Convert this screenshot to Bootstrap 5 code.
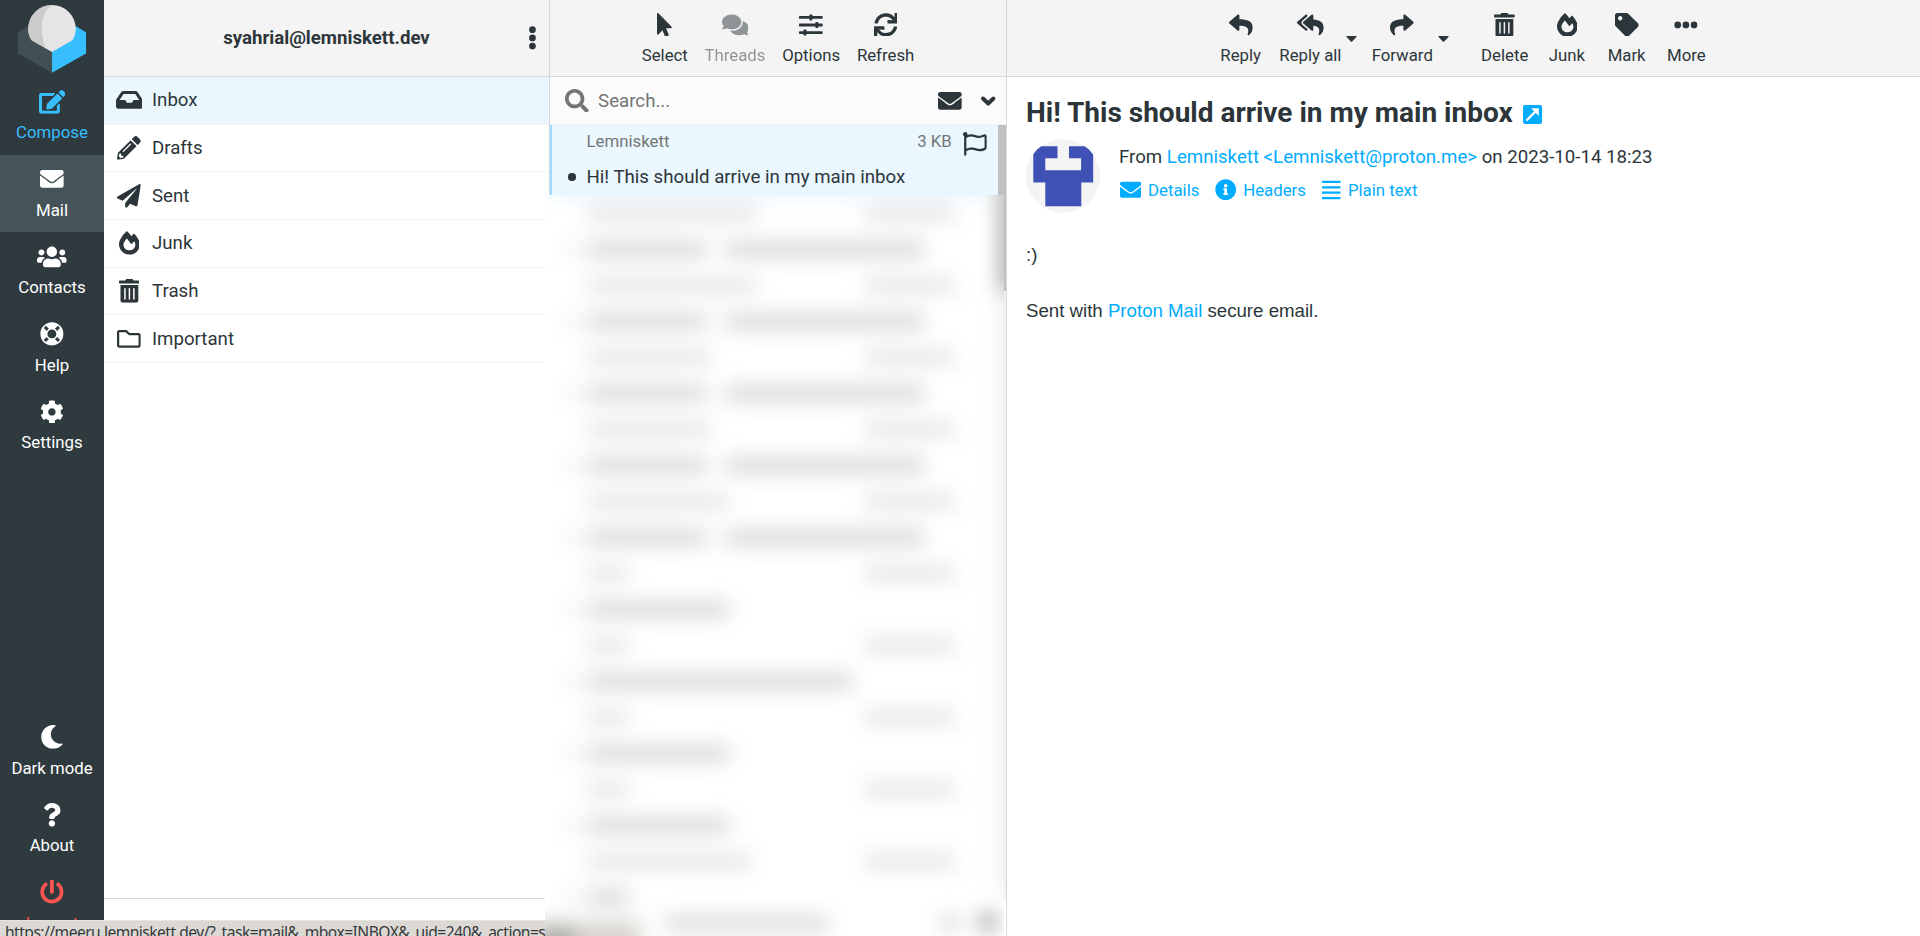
<!DOCTYPE html>
<html lang="en">
<head>
<meta charset="utf-8">
<title>Webmail</title>
<meta name="viewport" content="width=device-width, initial-scale=1">
<link href="https://cdn.jsdelivr.net/npm/bootstrap@5.3.0/dist/css/bootstrap.min.css" rel="stylesheet">
<style>
  body { font-family: Roboto, sans-serif; font-size: 18.667px; line-height: 1.5; color: #2c363a; background: #fff; height: 936px; overflow: hidden; }
  a { text-decoration: none; }
  a.lnk, a.lnk:not([href]) { color: #00acff; text-decoration: none; }
  .ico { height: 23.8px; width: auto; fill: currentColor; display: block; flex: none; }

  .taskmenu { width: 104px; background: #2f3a3f; height: 936px; overflow: hidden; }
  .taskmenu .logo-box { height: 77.4px; flex: none; }
  a.task:not([href]) { height: 77.4px; flex: none; padding-top: 12.6px; color: #fff; font-size: 16.8px; line-height: 22px; white-space: nowrap; }
  .task .ico { margin-bottom: 7.600px; }
  a.task.compose:not([href]) { color: #37beff; }
  .task.current { background: #465459; }
  a.task.logout:not([href]) { color: #ff5552; }
  .task-bottom { margin-top: 248.4px; }

  .pane-head { height: 77px; background: #f4f4f4; border-bottom: 1px solid #d0dadd; flex: none; }
  .folders { width: 446px; border-right: 1px solid #d0dadd; }
  .folders .ico.kebab { height: 23.800px; right: 12px; }
  .folders .folder { height: 47.667px; border: 0; border-bottom: 1px solid #f1f3f4 !important; border-radius: 0; padding: 0 0 0 10px; color: inherit; background: transparent; }
  .folders .folder.current { background: #eaf7fe; }
  .folder .slot { width: 30px; margin-right: 8px; }
  .folder-foot { height: 38px; border-top: 1px solid #d0dadd; }

  .messages { width: 457px; border-right: 1px solid #d0dadd; }
  .tool { min-width: 59.7px; padding: 12.500px 8.8px 0; font-size: 16.8px; line-height: 22px; white-space: nowrap; height: 76px; }
  .list-tools .tool { min-width: 0; padding-left: 8.350px; padding-right: 8.350px; }
  .tool .ico { margin-bottom: 7.600px; }
  .tool.off { opacity: .5; }
  .drop { width: 12.600px; height: 76px; padding-top: 36px; }
  .drop svg { display: block; margin-left: -4px; }
  .gap-wide { width: 18px; }

  .searchbar { height: 48px; background: #fbfbfb; border-bottom: 1px solid #f1f3f4; padding: 0 8px 0 15px; color: #737677; flex: none; }
  .searchbar .dark { color: #2c363a; }
  .msg { height: 72px; background: #eaf7fe; border-left: 2px solid #9fdcff; width: 448px; }
  .msg .from-line { font-size: 16.8px; line-height: 24px; color: #737677; }
  .dot { width: 7.5px; height: 7.5px; background: #2c363a; }
  .thumb { width: 8px; height: 166px; background: #c1c1c1; }
  .track { width: 8px; background: #f1f1f1; height: 773px; }

  .veil { left: -5px; top: 195px; width: 459px; height: 741px; background: #fff; }
  .veil-in { filter: blur(10px); inset: -40px; padding: 40px 50px 0 82px; }
  .veil-in .line-a, .veil-in .line-b { height: 36px; }
  .bar { height: 15px; background: #e4e4e4; flex: none; }
  .line-b .bar { background: #d3d6d6; }
  .shade { right: 24px; width: 22px; top: 0; height: 136px; background: #b4b4b4; }
  .shade-low { right: 24px; width: 22px; top: 136px; height: 600px; background: #f0f0f0; }
  .shade-sel { left: 40px; right: 48px; top: 10px; height: 30px; background: #e6f5fd; }
  .shade-status { left: 0; width: 136px; bottom: 0; height: 55px; background: #d8d5cf; }
  .shade-ink { left: 38px; width: 30px; bottom: 22px; height: 24px; background: #a09f9b; }
  .shade-foot { left: 160px; width: 164px; bottom: 46px; height: 14px; background: #d6d6d6; }
  .shade-f1 { left: 438px; width: 14px; bottom: 46px; height: 14px; background: #c8c8c8; }
  .shade-f2 { left: 474px; width: 18px; bottom: 46px; height: 16px; background: #9a9a9a; }

  .reader-body { padding: 15px 19px 0; }
  .subject { font-size: 28px; font-weight: 700; line-height: 40px; margin: 0; padding-top: 1px; }
  .avatar { width: 74px; height: 74px; flex: none; margin-top: -1px; }
  .msg-links { font-size: 16.8px; line-height: 24px; margin-top: 7px; }
  .msg-links .ico { height: 21.4px; }
  .mail-text { font-family: "Liberation Sans", sans-serif; font-size: 18.667px; line-height: 28px; margin-top: 28px; }

  .statusbar { left: 0; top: 920px; width: 545px; height: 16px; background: #dcd9d5; border-top: 1px solid #e6e4e1; font-family: "Noto Sans", sans-serif; font-size: 15.6px; letter-spacing: -.52px; line-height: 23px; color: #36393b; padding-left: 5px; white-space: nowrap; overflow: hidden; }
</style>
</head>
<body>
<svg class="d-none" xmlns="http://www.w3.org/2000/svg">
  <symbol id="edit" viewBox="0 0 576 512"><path d="M402.6 83.2l90.2 90.2c3.8 3.8 3.8 10 0 13.8L274.4 405.6l-92.8 10.3c-12.4 1.4-22.9-9.1-21.5-21.5l10.3-92.8L388.8 83.2c3.8-3.8 10-3.8 13.8 0zm162-22.9l-48.8-48.8c-15.2-15.2-39.9-15.2-55.2 0l-35.4 35.4c-3.8 3.8-3.8 10 0 13.8l90.2 90.2c3.8 3.8 10 3.8 13.8 0l35.4-35.4c15.2-15.3 15.2-40 0-55.2zM384 346.2V448H64V128h229.8c3.2 0 6.2-1.3 8.5-3.5l40-40c7.6-7.6 2.2-20.5-8.5-20.5H48C21.5 64 0 85.5 0 112v352c0 26.5 21.5 48 48 48h352c26.5 0 48-21.5 48-48V306.2c0-10.7-12.9-16-20.5-8.5l-40 40c-2.2 2.3-3.5 5.3-3.5 8.5z"/></symbol>
  <symbol id="mail" viewBox="0 0 512 512"><path d="M502.3 190.8c3.9-3.1 9.7-.2 9.7 4.7V400c0 26.5-21.5 48-48 48H48c-26.5 0-48-21.5-48-48V195.6c0-5 5.7-7.8 9.7-4.7 22.4 17.4 52.1 39.5 154.1 113.6 21.1 15.4 56.7 47.8 92.2 47.6 35.7.3 72-32.8 92.3-47.6 102-74.1 131.6-96.3 154-113.7zM256 320c23.2.4 56.6-29.2 73.4-41.4 132.7-96.3 142.8-104.7 173.4-128.7 5.8-4.5 9.2-11.5 9.2-18.9v-19c0-26.5-21.5-48-48-48H48c-26.5 0-48 21.5-48 48v19c0 7.4 3.4 14.3 9.2 18.9 30.6 23.9 40.7 32.4 173.4 128.7 16.8 12.2 50.2 41.8 73.4 41.4z"/></symbol>
  <symbol id="users" viewBox="0 0 640 512"><path d="M96 224c35.3 0 64-28.7 64-64s-28.7-64-64-64-64 28.7-64 64 28.7 64 64 64zm448 0c35.3 0 64-28.7 64-64s-28.7-64-64-64-64 28.7-64 64 28.7 64 64 64zm32 32h-64c-17.6 0-33.5 7.1-45.1 18.6 40.3 22.1 68.9 62 75.1 109.4h66c17.7 0 32-14.3 32-32v-32c0-35.3-28.7-64-64-64zm-256 0c61.9 0 112-50.1 112-112S381.9 32 320 32 208 82.1 208 144s50.1 112 112 112zm76.8 32h-8.3c-20.8 10-43.9 16-68.5 16s-47.6-6-68.5-16h-8.3C179.6 288 128 339.6 128 403.2V432c0 26.5 21.5 48 48 48h288c26.5 0 48-21.5 48-48v-28.8c0-63.6-51.6-115.2-115.2-115.2zm-223.7-13.4C161.5 263.1 145.6 256 128 256H64c-35.3 0-64 28.7-64 64v32c0 17.7 14.3 32 32 32h65.9c6.3-47.4 34.9-87.3 75.2-109.4z"/></symbol>
  <symbol id="ring" viewBox="0 0 512 512"><path d="M256 8C119.033 8 8 119.033 8 256s111.033 248 248 248 248-111.033 248-248S392.967 8 256 8zm173.696 119.559l-63.399 63.399c-10.987-18.559-26.67-34.252-45.255-45.255l63.399-63.399a218.396 218.396 0 0 1 45.255 45.255zM256 352c-53.019 0-96-42.981-96-96s42.981-96 96-96 96 42.981 96 96-42.981 96-96 96zM127.559 82.304l63.399 63.399c-18.559 10.987-34.252 26.67-45.255 45.255l-63.399-63.399a218.372 218.372 0 0 1 45.255-45.255zM82.304 384.441l63.399-63.399c10.987 18.559 26.67 34.252 45.255 45.255l-63.399 63.399a218.396 218.396 0 0 1-45.255-45.255zm302.137 45.255l-63.399-63.399c18.559-10.987 34.252-26.67 45.255-45.255l63.399 63.399a218.403 218.403 0 0 1-45.255 45.255z"/></symbol>
  <symbol id="cog" viewBox="0 0 512 512"><path d="M487.4 315.7l-42.6-24.6c4.3-23.2 4.3-47 0-70.2l42.6-24.6c4.9-2.8 7.1-8.6 5.5-14-11.1-35.6-30-67.8-54.7-94.6-3.8-4.1-10-5.1-14.8-2.3L380.8 110c-17.9-15.4-38.5-27.3-60.8-35.1V25.8c0-5.6-3.9-10.5-9.4-11.7-36.7-8.2-74.3-7.8-109.2 0-5.5 1.2-9.4 6.1-9.4 11.7V75c-22.2 7.9-42.8 19.8-60.8 35.1L88.7 85.5c-4.9-2.8-11-1.9-14.8 2.3-24.7 26.7-43.6 58.9-54.7 94.6-1.7 5.4.6 11.2 5.5 14L67.3 221c-4.3 23.2-4.3 47 0 70.2l-42.6 24.6c-4.9 2.8-7.1 8.6-5.5 14 11.1 35.6 30 67.8 54.7 94.6 3.8 4.1 10 5.1 14.8 2.3l42.6-24.6c17.9 15.4 38.5 27.3 60.8 35.1v49.2c0 5.6 3.9 10.5 9.4 11.7 36.7 8.2 74.3 7.8 109.2 0 5.5-1.2 9.4-6.1 9.4-11.7v-49.2c22.2-7.9 42.8-19.8 60.8-35.1l42.6 24.6c4.9 2.8 11 1.9 14.8-2.3 24.7-26.7 43.6-58.9 54.7-94.6 1.5-5.5-.7-11.3-5.6-14.1zM256 336c-44.1 0-80-35.9-80-80s35.9-80 80-80 80 35.9 80 80-35.9 80-80 80z"/></symbol>
  <symbol id="moon" viewBox="0 0 512 512"><path d="M283.211 512c78.962 0 151.079-35.925 198.857-94.792 7.068-8.708-.639-21.43-11.562-19.35-124.203 23.654-238.262-71.576-238.262-196.954 0-72.222 38.662-138.635 101.498-174.394 9.686-5.512 7.25-20.197-3.756-22.23A258.156 258.156 0 0 0 283.211 0c-141.309 0-256 114.511-256 256 0 141.309 114.511 256 256 256z"/></symbol>
  <symbol id="question" viewBox="0 0 384 512"><path d="M202.021 0C122.202 0 70.503 32.703 29.914 91.026c-7.363 10.58-5.093 25.086 5.178 32.874l43.138 32.709c10.373 7.865 25.132 6.026 33.253-4.148 25.049-31.381 43.63-49.449 82.757-49.449 30.764 0 68.816 19.799 68.816 49.631 0 22.552-18.617 34.134-48.993 51.164-35.423 19.86-82.299 44.576-82.299 106.405V320c0 13.255 10.745 24 24 24h72.471c13.255 0 24-10.745 24-24v-5.773c0-42.86 125.268-44.645 125.268-160.627C377.504 66.256 286.902 0 202.021 0zM192 373.459c-38.196 0-69.271 31.075-69.271 69.271 0 38.195 31.075 69.27 69.271 69.27s69.271-31.075 69.271-69.271-31.075-69.27-69.271-69.27z"/></symbol>
  <symbol id="power" viewBox="0 0 512 512"><path d="M400 54.1c63 45 104 118.6 104 201.9 0 136.8-110.8 247.7-247.5 248C120 504.3 8.2 393 8 256.4 7.9 173.1 48.9 99.3 111.8 54.2c11.7-8.3 28-4.8 35 7.7L162.6 90c5.9 10.5 3.1 23.8-6.6 31-41.5 30.8-68 79.6-68 134.9-.1 92.3 74.5 168.1 168 168.1 91.6 0 168.6-74.2 168-169.1-.3-51.8-24.7-101.8-68.1-134-9.7-7.2-12.4-20.5-6.5-30.9l15.8-28.1c7-12.4 23.2-16.1 34.8-7.8zM296 264V24c0-13.3-10.7-24-24-24h-32c-13.3 0-24 10.7-24 24v240c0 13.3 10.7 24 24 24h32c13.3 0 24-10.7 24-24z"/></symbol>
  <symbol id="inbox" viewBox="0 0 576 512"><path d="M567.938 243.908L462.25 85.374A48.003 48.003 0 0 0 422.311 64H153.689a48 48 0 0 0-39.938 21.374L8.062 243.908A47.994 47.994 0 0 0 0 270.533V400c0 26.51 21.49 48 48 48h480c26.51 0 48-21.49 48-48V270.533a47.994 47.994 0 0 0-8.062-26.625zM162.252 128h251.497l85.333 128H376l-32 64H232l-32-64H76.918l85.334-128z"/></symbol>
  <symbol id="pencil" viewBox="0 0 512 512"><path d="M497.9 142.1l-46.1 46.1c-4.7 4.7-12.3 4.7-17 0l-111-111c-4.7-4.7-4.7-12.3 0-17l46.1-46.1c18.7-18.7 49.1-18.7 67.9 0l60.1 60.1c18.8 18.7 18.8 49.1 0 67.9zM284.2 99.8L21.6 362.4.4 483.9c-2.9 16.4 11.4 30.6 27.8 27.8l121.5-21.3 262.6-262.6c4.7-4.7 4.7-12.3 0-17l-111-111c-4.8-4.7-12.4-4.7-17.1 0zM124.1 339.9c-5.5-5.5-5.5-14.3 0-19.8l154-154c5.5-5.5 14.3-5.5 19.8 0s5.5 14.3 0 19.8l-154 154c-5.5 5.5-14.3 5.5-19.8 0zM88 424h48v36.3l-64.5 11.3-31.1-31.1L51.7 376H88v48z"/></symbol>
  <symbol id="plane" viewBox="0 0 512 512"><path d="M476 3.2L12.5 270.6c-18.1 10.4-15.8 35.6 2.2 43.2L121 358.4l287.3-253.2c5.5-4.9 13.3 2.6 8.6 8.3L176 407v80.5c0 23.6 28.5 32.9 42.5 15.8L282 426l124.6 52.2c14.2 6 30.4-2.9 33-18.2l72-432C515 7.8 493.3-6.8 476 3.2z"/></symbol>
  <symbol id="fire" viewBox="0 0 448 512"><path d="M323.56 51.2c-20.8 19.3-39.58 39.59-56.22 59.97C240.08 73.62 206.28 35.53 168 0 69.74 91.17 0 209.96 0 281.6 0 408.85 100.29 512 224 512s224-103.15 224-230.4c0-53.27-51.98-163.14-124.44-230.4zm-19.47 340.65C282.43 407.01 255.72 416 226.86 416 154.71 416 96 368.26 96 290.75c0-38.61 24.31-72.63 72.79-130.75 6.93 7.98 98.83 125.34 98.83 125.34l58.63-66.88c4.14 6.85 7.91 13.55 11.27 19.97 27.35 52.19 15.81 118.97-33.43 153.42z"/></symbol>
  <symbol id="trash" viewBox="0 0 448 512"><path d="M32 464a48 48 0 0 0 48 48h288a48 48 0 0 0 48-48V128H32zm272-256a16 16 0 0 1 32 0v224a16 16 0 0 1-32 0zm-96 0a16 16 0 0 1 32 0v224a16 16 0 0 1-32 0zm-96 0a16 16 0 0 1 32 0v224a16 16 0 0 1-32 0zM432 32H312l-9.4-18.7A24 24 0 0 0 281.1 0H166.8a23.72 23.72 0 0 0-21.4 13.3L136 32H16A16 16 0 0 0 0 48v32a16 16 0 0 0 16 16h416a16 16 0 0 0 16-16V48a16 16 0 0 0-16-16z"/></symbol>
  <symbol id="folder" viewBox="0 0 512 512"><path d="M464 128H272l-54.63-54.63c-6-6-14.14-9.37-22.63-9.37H48C21.49 64 0 85.49 0 112v288c0 26.51 21.49 48 48 48h416c26.51 0 48-21.49 48-48V176c0-26.51-21.49-48-48-48zm0 272H48V112h140.12l54.63 54.63c6 6 14.14 9.37 22.63 9.37H464v224z"/></symbol>
  <symbol id="dots-v" viewBox="0 0 192 512"><circle cx="96" cy="80" r="72"/><circle cx="96" cy="256" r="72"/><circle cx="96" cy="432" r="72"/></symbol>
  <symbol id="dots-h" viewBox="0 0 512 512"><circle cx="80" cy="256" r="72"/><circle cx="256" cy="256" r="72"/><circle cx="432" cy="256" r="72"/></symbol>
  <symbol id="pointer" viewBox="0 0 320 512"><path d="M302.189 329.126H196.105l55.831 135.993c3.889 9.428-.555 19.999-9.444 23.999l-49.165 21.427c-9.165 4-19.443-.571-23.332-9.714l-53.053-129.136-86.664 89.138C18.729 472.71 0 463.554 0 447.977V18.299C0 1.899 19.921-6.096 30.277 5.443l284.412 292.542c11.472 11.179 3.007 31.141-12.5 31.141z"/></symbol>
  <symbol id="comments" viewBox="0 0 576 512"><path d="M416 192c0-88.4-93.1-160-208-160S0 103.6 0 192c0 34.3 14.1 65.9 38 92-13.4 30.2-35.5 54.2-35.8 54.5-2.2 2.3-2.8 5.7-1.5 8.7S4.8 352 8 352c36.6 0 66.9-12.3 88.7-25 32.2 15.7 70.3 25 111.3 25 114.9 0 208-71.6 208-160zm122 220c23.9-26 38-57.7 38-92 0-66.9-53.5-124.2-129.3-148.1.9 6.6 1.3 13.3 1.3 20.1 0 105.9-107.7 192-240 192-10.8 0-21.3-.8-31.7-1.9C207.8 439.6 281.8 480 368 480c41 0 79.1-9.2 111.3-25 21.8 12.7 52.1 25 88.7 25 3.2 0 6.1-1.9 7.3-4.8 1.3-2.9.7-6.3-1.5-8.7-.3-.3-22.4-24.2-35.8-54.5z"/></symbol>
  <symbol id="sliders" viewBox="0 0 512 512"><rect y="66" width="512" height="60" rx="14"/><rect y="228" width="512" height="60" rx="14"/><rect y="390" width="512" height="60" rx="14"/><rect x="224" y="32" width="64" height="128" rx="16"/><rect x="352" y="194" width="64" height="128" rx="16"/><rect x="96" y="356" width="64" height="128" rx="16"/></symbol>
  <symbol id="sync" viewBox="0 0 512 512"><path d="M440.65 12.57l4 82.77A247.16 247.16 0 0 0 255.83 8C134.73 8 33.91 94.92 12.29 209.82A12 12 0 0 0 24.09 224h49.05a12 12 0 0 0 11.67-9.26 175.91 175.91 0 0 1 317-56.94l-101.46-4.86a12 12 0 0 0-12.57 12v47.41a12 12 0 0 0 12 12H500a12 12 0 0 0 12-12V12a12 12 0 0 0-12-12h-47.37a12 12 0 0 0-11.98 12.57zM255.83 432a175.61 175.61 0 0 1-146-77.8l101.8 4.87a12 12 0 0 0 12.57-12v-47.4a12 12 0 0 0-12-12H12a12 12 0 0 0-12 12V500a12 12 0 0 0 12 12h47.35a12 12 0 0 0 12-12.6l-4.15-82.57A247.17 247.17 0 0 0 255.83 504c121.11 0 221.93-86.92 243.55-201.82a12 12 0 0 0-11.8-14.18h-49.05a12 12 0 0 0-11.67 9.26A175.86 175.86 0 0 1 255.83 432z"/></symbol>
  <symbol id="search" viewBox="0 0 512 512"><path d="M505 442.7L405.3 343c-4.5-4.5-10.6-7-17-7H372c27.6-35.3 44-79.7 44-128C416 93.1 322.9 0 208 0S0 93.1 0 208s93.1 208 208 208c48.3 0 92.7-16.4 128-44v16.3c0 6.4 2.5 12.5 7 17l99.7 99.7c9.4 9.4 24.6 9.4 33.9 0l28.3-28.3c9.4-9.4 9.4-24.6.1-34zM208 336c-70.7 0-128-57.2-128-128 0-70.7 57.2-128 128-128 70.7 0 128 57.2 128 128 0 70.7-57.2 128-128 128z"/></symbol>
  <symbol id="flag" viewBox="0 0 512 512"><path d="M336.174 80c-49.132 0-93.305-32-161.913-32-31.301 0-58.303 6.482-80.721 15.168a48.04 48.04 0 0 0 2.142-20.727C93.067 19.575 74.167 1.594 51.201.104 23.242-1.71 0 20.431 0 48c0 17.764 9.657 33.262 24 41.562V496c0 8.837 7.163 16 16 16h16c8.837 0 16-7.163 16-16v-83.443C109.869 395.28 143.259 384 199.826 384c49.132 0 93.305 32 161.913 32 58.479 0 101.972-22.617 128.548-39.981C503.846 367.161 512 352.051 512 335.855V95.937c0-34.459-35.264-57.768-66.904-44.117C409.193 67.309 371.641 80 336.174 80zM464 336c-21.783 15.412-60.824 32-102.261 32-59.945 0-102.002-32-161.913-32-43.361 0-96.379 9.403-127.826 24V128c21.784-15.412 60.824-32 102.261-32 59.945 0 102.002 32 161.913 32 43.271 0 96.32-17.366 127.826-32v240z"/></symbol>
  <symbol id="reply" viewBox="0 0 512 512"><path d="M8.309 189.836L184.313 37.851C199.719 24.546 224 35.347 224 56.015v80.053c160.629 1.839 288 34.032 288 186.258 0 61.441-39.581 122.309-83.333 154.132-13.653 9.931-33.111-2.533-28.077-18.631 45.344-145.012-21.507-183.51-176.59-185.742V360c0 20.7-24.3 31.453-39.687 18.164l-176.004-152c-11.071-9.562-11.086-26.753 0-36.328z"/></symbol>
  <symbol id="forward" viewBox="0 0 512 512"><g transform="translate(512 0) scale(-1 1)"><path d="M8.309 189.836L184.313 37.851C199.719 24.546 224 35.347 224 56.015v80.053c160.629 1.839 288 34.032 288 186.258 0 61.441-39.581 122.309-83.333 154.132-13.653 9.931-33.111-2.533-28.077-18.631 45.344-145.012-21.507-183.51-176.59-185.742V360c0 20.7-24.3 31.453-39.687 18.164l-176.004-152c-11.071-9.562-11.086-26.753 0-36.328z"/></g></symbol>
  <symbol id="reply-all" viewBox="0 0 576 512"><path d="M136.309 189.836L312.313 37.851C327.72 24.546 352 35.348 352 56.015v82.763c129.182 10.231 224 52.212 224 183.548 0 61.441-39.582 122.309-83.333 154.132-13.653 9.931-33.111-2.533-28.077-18.631 38.512-123.162-3.922-169.482-112.59-182.015v84.175c0 20.701-24.3 31.453-39.687 18.164L136.309 226.164c-11.071-9.561-11.086-26.753 0-36.328zm-128 36.328L184.313 378.15C199.7 391.439 224 380.687 224 359.986v-15.818l-108.606-93.785A55.96 55.96 0 0 1 96 207.998a55.953 55.953 0 0 1 19.393-42.38L224 71.832V56.015c0-20.667-24.28-31.469-39.687-18.164L8.309 189.836c-11.086 9.575-11.071 26.767 0 36.328z"/></symbol>
  <symbol id="tag" viewBox="0 0 512 512"><path d="M0 252.118V48C0 21.49 21.49 0 48 0h204.118a48 48 0 0 1 33.941 14.059l211.882 211.882c18.745 18.745 18.745 49.137 0 67.882L293.823 497.941c-18.745 18.745-49.137 18.745-67.882 0L14.059 286.059A48 48 0 0 1 0 252.118zM112 64c-26.51 0-48 21.49-48 48s21.49 48 48 48 48-21.49 48-48-21.49-48-48-48z"/></symbol>
  <symbol id="info" viewBox="0 0 512 512"><path d="M256 8C119.043 8 8 119.083 8 256c0 136.997 111.043 248 248 248s248-111.003 248-248C504 119.083 392.957 8 256 8zm0 110c23.196 0 42 18.804 42 42s-18.804 42-42 42-42-18.804-42-42 18.804-42 42-42zm56 254c0 6.627-5.373 12-12 12h-88c-6.627 0-12-5.373-12-12v-24c0-6.627 5.373-12 12-12h12v-64h-12c-6.627 0-12-5.373-12-12v-24c0-6.627 5.373-12 12-12h64c6.627 0 12 5.373 12 12v100h12c6.627 0 12 5.373 12 12v24z"/></symbol>
  <symbol id="justify" viewBox="0 0 448 512"><rect y="44" width="448" height="54" rx="8"/><rect y="172" width="448" height="54" rx="8"/><rect y="300" width="448" height="54" rx="8"/><rect y="428" width="448" height="54" rx="8"/></symbol>
</svg>

<div class="d-flex">
  <nav class="taskmenu d-flex flex-column">
    <div class="logo-box">
      <svg width="104" height="77" viewBox="0 0 104 77">
        <path d="M18 32.3 52 12V72.8L18 53.5z" fill="#424f54"/>
        <path d="M86 32.3 52 12V72.8L86 53.5z" fill="#37beff"/>
        <path d="M52 5a23.8 24 0 0 1 23.8 24c0 4.200-1.300 8-3.500 11.200L52 51.900 31.700 40.200C29.500 37 28.200 33.200 28.200 29A23.800 24 0 0 1 52 5z" fill="#e5e5e5"/>
        <path d="M52 5C45.500 9 41.800 18.500 41.800 29c0 6.500 1.200 12 3.600 19.100L31.700 40.200C29.500 37 28.200 33.200 28.200 29A23.800 24 0 0 1 52 5z" fill="#cbcbcb"/>
      </svg>
    </div>
    <a class="task compose d-flex flex-column align-items-center"><svg class="ico" viewBox="0 0 576 512"><use href="#edit"/></svg>Compose</a>
    <a class="task current d-flex flex-column align-items-center"><svg class="ico" viewBox="0 0 512 512"><use href="#mail"/></svg>Mail</a>
    <a class="task d-flex flex-column align-items-center"><svg class="ico" viewBox="0 0 640 512"><use href="#users"/></svg>Contacts</a>
    <a class="task d-flex flex-column align-items-center"><svg class="ico" viewBox="0 0 512 512"><use href="#ring"/></svg>Help</a>
    <a class="task d-flex flex-column align-items-center"><svg class="ico" viewBox="0 0 512 512"><use href="#cog"/></svg>Settings</a>
    <a class="task task-bottom d-flex flex-column align-items-center"><svg class="ico" viewBox="0 0 512 512"><use href="#moon"/></svg>Dark mode</a>
    <a class="task d-flex flex-column align-items-center"><svg class="ico" viewBox="0 0 384 512"><use href="#question"/></svg>About</a>
    <a class="task logout d-flex flex-column align-items-center"><svg class="ico" viewBox="0 0 512 512"><use href="#power"/></svg>Logout</a>
  </nav>

  <section class="folders d-flex flex-column vh-100">
    <header class="pane-head position-relative d-flex align-items-center justify-content-center fw-bold">
      <span>syahrial@lemniskett.dev</span>
      <svg class="ico kebab position-absolute" viewBox="0 0 192 512"><use href="#dots-v"/></svg>
    </header>
    <div class="list-group list-group-flush flex-grow-1">
      <a class="folder current list-group-item d-flex align-items-center"><span class="slot d-flex justify-content-center"><svg class="ico" viewBox="0 0 576 512"><use href="#inbox"/></svg></span>Inbox</a>
      <a class="folder list-group-item d-flex align-items-center"><span class="slot d-flex justify-content-center"><svg class="ico" viewBox="0 0 512 512"><use href="#pencil"/></svg></span>Drafts</a>
      <a class="folder list-group-item d-flex align-items-center"><span class="slot d-flex justify-content-center"><svg class="ico" viewBox="0 0 512 512"><use href="#plane"/></svg></span>Sent</a>
      <a class="folder list-group-item d-flex align-items-center"><span class="slot d-flex justify-content-center"><svg class="ico" viewBox="0 0 448 512"><use href="#fire"/></svg></span>Junk</a>
      <a class="folder list-group-item d-flex align-items-center"><span class="slot d-flex justify-content-center"><svg class="ico" viewBox="0 0 448 512"><use href="#trash"/></svg></span>Trash</a>
      <a class="folder list-group-item d-flex align-items-center"><span class="slot d-flex justify-content-center"><svg class="ico" viewBox="0 0 512 512"><use href="#folder"/></svg></span>Important</a>
    </div>
    <div class="folder-foot"></div>
  </section>

  <section class="messages position-relative d-flex flex-column vh-100">
    <header class="pane-head list-tools d-flex justify-content-center">
      <a class="tool text-reset d-flex flex-column align-items-center"><svg class="ico" viewBox="0 0 320 512"><use href="#pointer"/></svg>Select</a>
      <a class="tool off text-reset d-flex flex-column align-items-center"><svg class="ico" viewBox="0 0 576 512"><use href="#comments"/></svg>Threads</a>
      <a class="tool text-reset d-flex flex-column align-items-center"><svg class="ico" viewBox="0 0 512 512"><use href="#sliders"/></svg>Options</a>
      <a class="tool text-reset d-flex flex-column align-items-center"><svg class="ico" viewBox="0 0 512 512"><use href="#sync"/></svg>Refresh</a>
    </header>
    <div class="searchbar d-flex align-items-center">
      <svg class="ico" viewBox="0 0 512 512"><use href="#search"/></svg>
      <span class="flex-grow-1" style="padding:1px 0 0 9.300px">Search...</span>
      <svg class="ico dark" viewBox="0 0 512 512"><use href="#mail"/></svg>
      <svg class="dark ms-3" width="20" height="14" viewBox="0 0 20 14" fill="none" stroke="currentColor" stroke-width="4" stroke-linecap="round" stroke-linejoin="round"><path d="M5 4.500 10.200 9.500 15.400 4.500"/></svg>
    </div>
    <div class="d-flex flex-grow-1">
      <div class="msg d-flex">
        <div class="d-flex align-items-center" style="width:34.500px;height:104px;padding-left:16px"><span class="dot rounded-circle"></span></div>
        <div class="flex-grow-1">
          <div class="from-line d-flex justify-content-between pt-1 pe-2"><span>Lemniskett</span><span>3 KB</span></div>
          <div style="margin-top:10px">Hi! This should arrive in my main inbox</div>
        </div>
        <svg class="ico" style="margin:7px 10.800px 0 3.600px" viewBox="0 0 512 512"><use href="#flag"/></svg>
      </div>
      <div class="track"><div class="thumb"></div></div>
    </div>

    <!-- privacy blur over the rest of the list -->
    <div class="veil position-absolute overflow-hidden">
      <div class="veil-in position-absolute" id="veil"></div>
    </div>
  </section>

  <main class="flex-grow-1 vh-100">
    <header class="pane-head d-flex justify-content-center">
      <a class="tool text-reset d-flex flex-column align-items-center"><svg class="ico" viewBox="0 0 512 512"><use href="#reply"/></svg>Reply</a>
      <a class="tool text-reset d-flex flex-column align-items-center"><svg class="ico" viewBox="0 0 576 512"><use href="#reply-all"/></svg>Reply all</a>
      <span class="drop"><svg width="11" height="6" viewBox="0 0 11 6" fill="#2c363a"><path d="M.8 0h9.400q.8.400.2 1L6.200 5.500q-.7.600-1.400 0L.6 1Q0 .4.800 0z"/></svg></span>
      <a class="tool text-reset d-flex flex-column align-items-center"><svg class="ico" viewBox="0 0 512 512"><use href="#forward"/></svg>Forward</a>
      <span class="drop"><svg width="11" height="6" viewBox="0 0 11 6" fill="#2c363a"><path d="M.8 0h9.400q.8.400.2 1L6.200 5.500q-.7.600-1.400 0L.6 1Q0 .4.800 0z"/></svg></span>
      <span class="gap-wide"></span>
      <a class="tool text-reset d-flex flex-column align-items-center"><svg class="ico" viewBox="0 0 448 512"><use href="#trash"/></svg>Delete</a>
      <a class="tool text-reset d-flex flex-column align-items-center"><svg class="ico" viewBox="0 0 448 512"><use href="#fire"/></svg>Junk</a>
      <a class="tool text-reset d-flex flex-column align-items-center"><svg class="ico" viewBox="0 0 512 512"><use href="#tag"/></svg>Mark</a>
      <a class="tool text-reset d-flex flex-column align-items-center"><svg class="ico" viewBox="0 0 512 512"><use href="#dots-h"/></svg>More</a>
    </header>
    <article class="reader-body">
      <div class="d-flex align-items-center">
        <h2 class="subject">Hi! This should arrive in my main inbox</h2>
        <svg width="19" height="19" viewBox="0 0 19 19" style="margin:3px 0 0 10px"><rect width="19" height="19" rx="2" fill="#00acff"/><path d="M3.500 15.500 13 6" stroke="#fff" stroke-width="2.400"/><path d="M8 3.200h7.800V11z" fill="#fff"/></svg>
      </div>
      <div class="d-flex mt-1" style="padding-top:3px">
        <svg class="avatar" viewBox="0 0 74 74">
          <defs><clipPath id="disc"><circle cx="37" cy="37" r="37"/></clipPath></defs>
          <g clip-path="url(#disc)"><rect width="74" height="74" fill="#f4f4f4"/><path fill="#3f51b5" d="M7.300 7.200h24.200v12H19.300v12h35.800v-12H43v-12h24.200v36.200H55.300V67.300h-36V43.400h-12z"/></g>
        </svg>
        <div style="margin-left:19px;padding-top:3px">
          <div>From <a class="lnk">Lemniskett &lt;Lemniskett@proton.me&gt;</a> on 2023-10-14 18:23</div>
          <div class="msg-links d-flex">
            <a class="lnk d-flex align-items-center" style="margin-left:1px"><svg class="ico" style="margin-right:6.700px" viewBox="0 0 512 512"><use href="#mail"/></svg>Details</a>
            <a class="lnk d-flex align-items-center" style="margin-left:15.700px"><svg class="ico" style="margin-right:6.700px" viewBox="0 0 512 512"><use href="#info"/></svg>Headers</a>
            <a class="lnk d-flex align-items-center ms-3"><svg class="ico" style="margin-right:7.300px" viewBox="0 0 448 512"><use href="#justify"/></svg>Plain text</a>
          </div>
        </div>
      </div>
      <div class="mail-text">
        <div>:)</div>
        <div><br></div>
        <div>Sent with <a class="lnk">Proton Mail</a> secure email.</div>
      </div>
    </article>
  </main>
</div>
<div class="statusbar position-absolute">https://meeru.lemniskett.dev/?_task=mail&amp;_mbox=INBOX&amp;_uid=240&amp;_action=s</div>

<script>
  // sender width, then the subject's segments: [gap before, width]
  const rows = [
    [170, [[0,120],[18,200]]], [170, [[0,120],[18,200]]], [124, [[0,120],[18,200]]],
    [124, [[0,120],[18,200]]], [142, [[0,120],[18,200]]], [42, [[0,142]]],
    [42, [[0,266]]], [42, [[0,142]]], [42, [[0,142]]], [164, [[0,42]]]
  ];
  const extra = ['shade-sel','shade','shade-low','shade-status','shade-ink','shade-foot','shade-f1','shade-f2']
    .map(c => `<div class="${c} position-absolute"></div>`).join('');
  document.getElementById('veil').innerHTML = extra + rows.map(([w, segs]) => `
    <div class="line-a position-relative d-flex align-items-center justify-content-between">
      <div class="bar" style="width:${w}px"></div><div class="bar" style="width:90px;margin-right:40px"></div>
    </div>
    <div class="line-b position-relative d-flex align-items-center">
      <div class="bar" style="width:8px;height:8px;margin-left:-19px;margin-right:11px"></div>
      ${segs.map(([g, s]) => `<div class="bar" style="width:${s}px;margin-left:${g}px"></div>`).join('')}
    </div>`).join('');
</script>
<script src="https://cdn.jsdelivr.net/npm/bootstrap@5.3.0/dist/js/bootstrap.bundle.min.js"></script>
</body>
</html>
